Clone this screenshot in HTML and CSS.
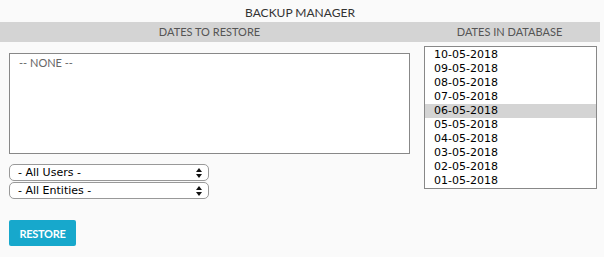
FILE: index.html
```html
<!DOCTYPE html>
<html lang="en">
<head>
    <meta charset="UTF-8">
    <title>Backup Manager</title>
    <link rel="stylesheet" href="styles.css">
</head>
<body>

<div class="manager">
    <h1 class="title">BACKUP MANAGER</h1>

    <div class="columns">
        <div class="col">
            <div class="col-head">DATES TO RESTORE</div>
            <div class="col-body left">
                <div class="listbox restore-list">
                    <div class="option empty">-- NONE --</div>
                </div>

                <div class="filters">
                    <div class="select-box">
                        <span>- All Users -</span>
                        <svg class="arrows" width="6" height="10" viewBox="0 0 6 10"><path d="M3 0 L6 4 L0 4 Z M0 6 L6 6 L3 10 Z" fill="#111"/></svg>
                    </div>
                    <div class="select-box">
                        <span>- All Entities -</span>
                        <svg class="arrows" width="6" height="10" viewBox="0 0 6 10"><path d="M3 0 L6 4 L0 4 Z M0 6 L6 6 L3 10 Z" fill="#111"/></svg>
                    </div>
                </div>

                <button class="btn-restore">RESTORE</button>
            </div>
        </div>

        <div class="col">
            <div class="col-head">DATES IN DATABASE</div>
            <div class="col-body right">
                <div class="listbox date-list">
                    <div class="option">10-05-2018</div>
                    <div class="option">09-05-2018</div>
                    <div class="option">08-05-2018</div>
                    <div class="option">07-05-2018</div>
                    <div class="option selected">06-05-2018</div>
                    <div class="option">05-05-2018</div>
                    <div class="option">04-05-2018</div>
                    <div class="option">03-05-2018</div>
                    <div class="option">02-05-2018</div>
                    <div class="option">01-05-2018</div>
                </div>
            </div>
        </div>
    </div>
</div>

</body>
</html>
```

FILE: styles.css
```css
body {
    margin: 0;
    background: #fafafa;
    font-family: Lato, 'Open Sans', sans-serif;
    color: #333;
}
.manager {
    width: 600px;
}
.title {
    margin: 0;
    height: 22px;
    padding-top: 5px;
    box-sizing: border-box;
    font-size: 12px;
    font-weight: normal;
    text-align: center;
    color: #333;
}
.columns {
    display: grid;
    grid-template-columns: 419px 181px;
}
.col-head {
    height: 20px;
    line-height: 20px;
    background: #d4d4d4;
    text-align: center;
    font-size: 11px;
    color: #555;
}
.col-body.left {
    padding: 11px 9px 0 9px;
}
.col-body.right {
    padding: 4px 3px 0 5px;
}
.listbox {
    background: #fff;
    border: 1px solid #888;
    box-sizing: border-box;
}
.restore-list {
    height: 101px;
    padding: 2px 9px;
}
.option.empty {
    font-size: 11px;
    color: #666;
    line-height: 14px;
}
.date-list {
    height: 143px;
    padding-top: 1px;
}
.date-list .option {
    height: 14px;
    line-height: 14px;
    padding-left: 9px;
    font-family: 'DejaVu Sans', sans-serif;
    font-size: 11px;
    color: #000;
}
.date-list .option.selected {
    background: #d4d4d4;
}
.filters {
    display: flex;
    flex-direction: column;
    gap: 1px;
    margin-top: 10px;
}
.select-box {
    display: flex;
    justify-content: space-between;
    align-items: center;
    width: 200px;
    height: 17px;
    box-sizing: border-box;
    border: 1px solid #999;
    border-radius: 5px;
    background: #fff;
    padding: 0 6px 0 8px;
    font-family: 'DejaVu Sans', sans-serif;
    font-size: 11px;
    color: #000;
}
.btn-restore {
    display: block;
    margin-top: 21px;
    width: 67px;
    height: 26px;
    border: none;
    border-radius: 2px;
    background: #17a8cc;
    color: #fff;
    font-family: Lato, sans-serif;
    font-weight: bold;
    font-size: 11px;
    letter-spacing: -0.3px;
    padding: 0;
    cursor: pointer;
}
```
